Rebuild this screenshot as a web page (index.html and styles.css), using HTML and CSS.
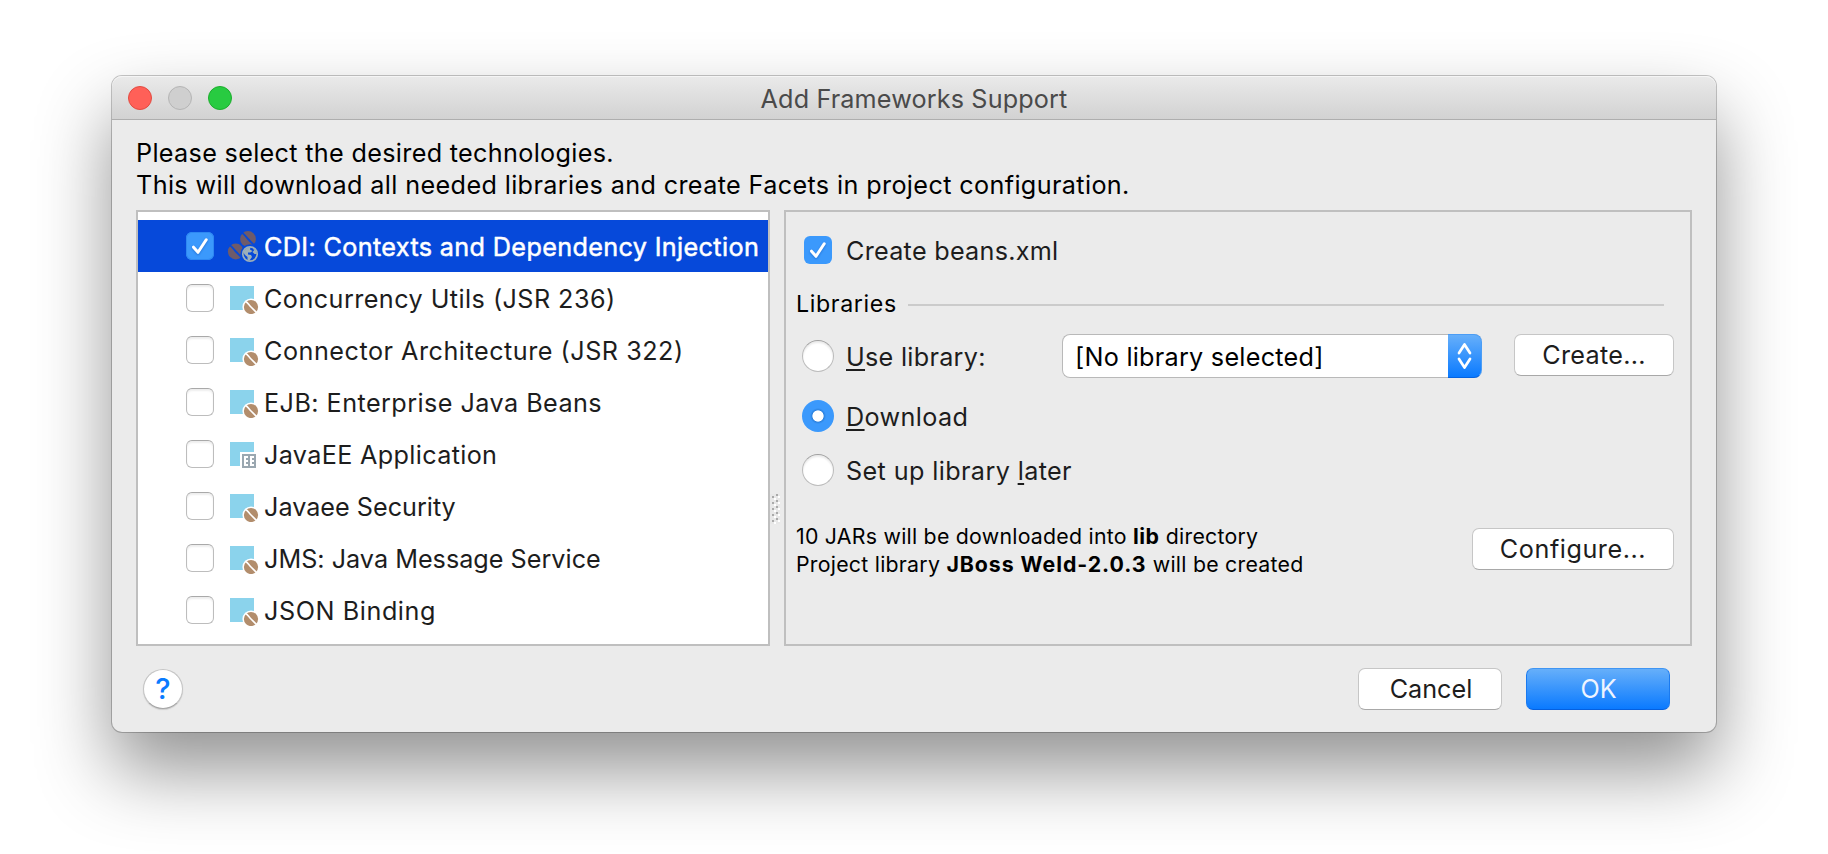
FILE: index.html
```html
<!DOCTYPE html>
<html lang="en">
<head>
<meta charset="utf-8">
<title>Add Frameworks Support</title>
<link rel="stylesheet" href="styles.css">
</head>
<body>
<svg class="defs" width="0" height="0" aria-hidden="true">
  <symbol id="check" viewBox="0 0 28 28"><path d="M7.5 15.2 L12 20.3 L20.2 7.8" fill="none" stroke="#fff" stroke-width="3" stroke-linecap="round" stroke-linejoin="round"/></symbol>
  <symbol id="bean" viewBox="0 0 32 32">
    <rect x="2" y="4" width="24" height="24" fill="#8bd3ec"/>
    <circle cx="23" cy="25" r="8.6" fill="#fff"/>
    <circle cx="23" cy="25" r="7.1" fill="#b28d6c"/>
    <path d="M17.2 19.2 C20 20.500 20.500 22.500 23 25 S27 29 28.800 30.800" fill="none" stroke="#fff" stroke-width="1.600"/>
  </symbol>
  <symbol id="ee" viewBox="0 0 32 32">
    <path d="M2 4H26V14H12V28H2Z" fill="#8bd3ec"/>
    <rect x="14" y="16" width="14" height="14" fill="#9aa7b0"/>
    <path d="M16 18H20V20H18V22H20V24H18V26H20V28H16ZM22 18H26V20H24V22H26V24H24V26H26V28H22Z" fill="#fff"/>
  </symbol>
  <symbol id="cdi" viewBox="0 0 32 32" overflow="visible">
    <circle cx="20" cy="9" r="7.900" fill="#6f5b6a"/>
    <path d="M13.500 2.500C17 4.500 17.500 6.500 20 9S24 13.500 26.500 15.500" fill="none" stroke="#0649da" stroke-width="1.900"/>
    <circle cx="7.800" cy="21.500" r="7.900" fill="#6f5b6a"/>
    <path d="M1.300 15C4.800 17 5.300 19 7.800 21.500S11.800 26 14.300 28" fill="none" stroke="#0649da" stroke-width="1.900"/>
    <circle cx="22" cy="24" r="9.700" fill="#0649da"/>
    <circle cx="22" cy="24" r="7.200" fill="none" stroke="#9dafb9" stroke-width="1.700"/>
    <path d="M15 22L18 18.500 22.500 17 22 19.500 24.500 21 22.500 22.500 20 22.500 20 24.500 23 25 24 27 21.500 30.500 19.500 30 19.500 27 17 25ZM25 18L28 20.500 28.800 24 26.500 24 24.500 22 26 20.500Z" fill="#9dafb9"/>
  </symbol>
</svg>
<main class="window">
  <header class="titlebar">
    <div class="lights"><i class="light close"></i><i class="light minimize"></i><i class="light zoom"></i></div>
    <h1 class="title">Add Frameworks Support</h1>
  </header>
  <div class="intro"><p>Please select the desired technologies.</p><p class="intro-second">This will download all needed libraries and create Facets in project configuration.</p></div>
  <div class="panels">
    <ul class="list">
      <li class="row selected"><span class="box checked"><svg><use href="#check"/></svg></span><svg class="icon"><use href="#cdi"/></svg><span class="name cdi">CDI: Contexts and Dependency Injection</span></li>
      <li class="row"><span class="box"></span><svg class="icon"><use href="#bean"/></svg><span class="name">Concurrency Utils (JSR 236)</span></li>
      <li class="row"><span class="box"></span><svg class="icon"><use href="#bean"/></svg><span class="name wide">Connector Architecture (JSR 322)</span></li>
      <li class="row"><span class="box"></span><svg class="icon"><use href="#bean"/></svg><span class="name">EJB: Enterprise Java Beans</span></li>
      <li class="row"><span class="box"></span><svg class="icon"><use href="#ee"/></svg><span class="name app">JavaEE Application</span></li>
      <li class="row"><span class="box"></span><svg class="icon"><use href="#bean"/></svg><span class="name tight">Javaee Security</span></li>
      <li class="row"><span class="box"></span><svg class="icon"><use href="#bean"/></svg><span class="name flat">JMS: Java Message Service</span></li>
      <li class="row"><span class="box"></span><svg class="icon"><use href="#bean"/></svg><span class="name wider">JSON Binding</span></li>
    </ul>
    <div class="splitter">
      <svg width="10" height="32" viewBox="0 0 10 32">
        <defs><pattern id="grip" width="10" height="6" patternUnits="userSpaceOnUse"><rect width="10" height="6" fill="#e8e8e8"/><path d="M6 0h2v2h-2zM2 2h2v2h-2z" fill="#aaa"/><path d="M8 2h2v2h-2zM4 4h2v2h-2z" fill="#fff"/></pattern></defs>
        <rect width="10" height="30" fill="url(#grip)"/>
      </svg>
    </div>
    <section class="settings">
      <div class="option beans"><span class="box checked"><svg><use href="#check"/></svg></span><span class="label beans-label">Create beans.xml</span></div>
      <div class="group"><span class="group-name">Libraries</span><span class="rule"></span></div>
      <div class="use-row">
        <div class="option"><span class="radio"></span><span class="label use"><u>U</u>se library:</span></div>
        <div class="combo"><span class="combo-text">[No library selected]</span><span class="stepper"><svg width="26" height="42" viewBox="0 0 26 42"><path d="M7 17L12.500 8.500 18 17M7 23L12.500 31.500 18 23" fill="none" stroke="#fff" stroke-width="2.700" stroke-linecap="round" stroke-linejoin="round"/></svg></span></div>
        <button class="button create">Create...</button>
      </div>
      <div class="option download"><span class="radio on"></span><span class="label"><u>D</u>ownload</span></div>
      <div class="option later"><span class="radio"></span><span class="label">Set up library <u>l</u>ater</span></div>
      <div class="note-row">
        <div class="note"><p>10 JARs will be downloaded into <b class="lib">lib</b> directory</p><p class="created">Project library <b>JBoss Weld-2.0.3</b> will be created</p></div>
        <button class="button configure">Configure...</button>
      </div>
    </section>
  </div>
  <footer class="footer">
    <button class="help">?</button>
    <div class="actions"><button class="button cancel">Cancel</button><button class="button primary">OK</button></div>
  </footer>
</main>
</body>
</html>
```
FILE: styles.css
```css
* { box-sizing: border-box; }
body {
  margin: 0;
  height: 854px;
  padding: 76px 112px 0;
  background: #fff;
  overflow: hidden;
  font-family: Inter, "Liberation Sans", sans-serif;
  font-size: 25.2px;
  line-height: 32px;
  color: #000;
}
p, h1, ul { margin: 0; padding: 0; font: inherit; list-style: none; }
.defs { position: absolute; }
.window {
  width: 1604px;
  height: 656px;
  border-radius: 10px;
  background: #ebebeb;
  box-shadow: 0 0 0 1px rgba(0,0,0,.22), 0 38px 74px rgba(0,0,0,.43);
}
.titlebar {
  display: grid;
  grid-template-columns: 1fr auto 1fr;
  height: 44px;
  padding: 0 16px;
  border-bottom: 1px solid #aeaeae;
  border-radius: 10px 10px 0 0;
  background: linear-gradient(#eaeaea, #d2d2d2);
  box-shadow: inset 0 1px #f5f5f5;
}
.lights { display: flex; gap: 16px; padding-top: 10px; }
.light { width: 24px; height: 24px; border-radius: 50%; border: 1px solid #b5b5b5; background: #cfcfcf; }
.close { background: #ff6058; border-color: #e24b41; }
.zoom { background: #28cb41; border-color: #1cae2d; }
.title { padding-top: 7px; color: #4a4a4a; letter-spacing: .14px; }

.intro { padding: 17px 0 0 24px; letter-spacing: .32px; }
.intro-second { letter-spacing: .37px; }
.panels {
  display: grid;
  grid-template-columns: 634px 14px 908px;
  height: 436px;
  margin: 9px 24px 0;
}
.list { padding-top: 8px; border: 2px solid #bfbfbf; background: #fff; }
.row { display: flex; align-items: center; height: 52px; padding-left: 48px; color: #1d1d1d; }
.selected { background: #0649da; color: #fff; }
.box {
  width: 28px;
  height: 28px;
  flex: none;
  border: 1.500px solid #bdbdbd;
  border-top-color: #a9a9a9;
  border-radius: 6px;
  background: #fff;
  box-shadow: inset 0 2px 2px #eee;
}
.checked { border: 0; background: #3b99fc; box-shadow: none; }
.checked svg { display: block; width: 28px; height: 28px; filter: drop-shadow(0 1px 1px rgba(0,60,160,.4)); }
.selected .checked { box-shadow: inset 0 0 0 1px #2e88f2; }
.icon { width: 32px; height: 32px; margin-left: 14px; flex: none; overflow: visible; }
.name { padding: 2px 0 0 4px; letter-spacing: .445px; white-space: nowrap; }
.name.cdi { letter-spacing: .36px; -webkit-text-stroke: .5px #fff; }
.name.wide { letter-spacing: .51px; }
.name.tight { letter-spacing: 0; }
.name.flat { letter-spacing: .01px; }
.name.wider { letter-spacing: .57px; }
.name.app { letter-spacing: .34px; }
.splitter { padding: 284px 0 0; }
.splitter svg { display: block; }

.settings { border: 2px solid #bfbfbf; padding: 16px 16px 0; }
.option { display: flex; align-items: center; height: 32px; }
.option .box { margin: 0 2px; }
.beans { height: 44px; }
.label { padding: 2px 0 0 12px; color: #1d1d1d; letter-spacing: .38px; white-space: nowrap; }
.beans-label { letter-spacing: .27px; }
.use { letter-spacing: .28px; }
.label u { text-decoration-thickness: 2px; text-underline-offset: 3px; text-decoration-skip-ink: none; }
.group { display: flex; align-items: center; height: 30px; margin: 18px 10px 0 -6px; }
.group-name { padding-bottom: 2px; font-size: 23.2px; line-height: 28px; letter-spacing: .63px; }
.rule { flex: 1; height: 2px; margin-left: 11px; background: #cbcbcb; }
.use-row { display: grid; grid-template-columns: 260px 420px 160px; height: 44px; margin-top: 14px; align-items: center; }
.use-row .button { margin-left: 32px; align-self: start; }
.combo { display: flex; height: 44px; border: 1px solid #b9b9b9; border-right: 0; border-radius: 8px; background: #fff; }
.combo-text { flex: 1; padding: 6px 0 0 12px; letter-spacing: .26px; }
.stepper {
  width: 34px;
  margin: -1px 0;
  padding: 1px 0 0 4px;
  border: 1px solid #4b9df5;
  border-bottom-color: #0563e0;
  border-left: 0;
  border-radius: 0 8px 8px 0;
  background: linear-gradient(#66affa, #0a7aff);
}
.stepper svg { display: block; }
.radio {
  width: 32px;
  height: 32px;
  border-radius: 50%;
  border: 1px solid #bcbcbc;
  border-top-color: #a0a0a0;
  background: #fff;
  box-shadow: inset 0 2px 2px #eaeaea;
}
.on { border: 0; box-shadow: none; background: radial-gradient(circle, #fff 5.200px, #2c82df 6px, #3b99fc 8px); }
.download { margin-top: 22px; }
.later { margin-top: 22px; }
.note-row { display: flex; justify-content: space-between; margin: 36px 0 0 -6px; }
.note { font-size: 21.3px; line-height: 28px; letter-spacing: .25px; white-space: nowrap; }
.note b { letter-spacing: .95px; }
.note .lib { letter-spacing: .5px; }

.button {
  height: 42px;
  padding: 0;
  border: 1px solid #c6c6c6;
  border-bottom-color: #a8a8a8;
  border-radius: 7px;
  background: #fff;
  color: #1d1d1d;
  font: inherit;
  line-height: 40px;
}
.create { width: 160px; letter-spacing: .28px; }
.configure { width: 202px; margin-top: 6px; letter-spacing: .55px; }
.cancel, .primary { width: 144px; }
.cancel { padding-left: 2px; }
.primary { padding-left: 1px; border-color: #3f95f3 #1a7af0 #0560df; background: linear-gradient(#66affa, #0a7aff); color: #eef4ff; }
.footer { display: flex; justify-content: space-between; padding: 22px 46px 0 31px; }
.actions { display: flex; gap: 24px; }
.help {
  width: 40px;
  height: 40px;
  margin-top: 1px;
  padding: 0;
  border: 1px solid #c4c4c4;
  border-bottom-color: #a6a6a6;
  border-radius: 50%;
  background: #fff;
  box-shadow: 0 1px 1px #ccc;
  color: #0a7bff;
  font: 500 29px/38px Inter, sans-serif;
}
```
